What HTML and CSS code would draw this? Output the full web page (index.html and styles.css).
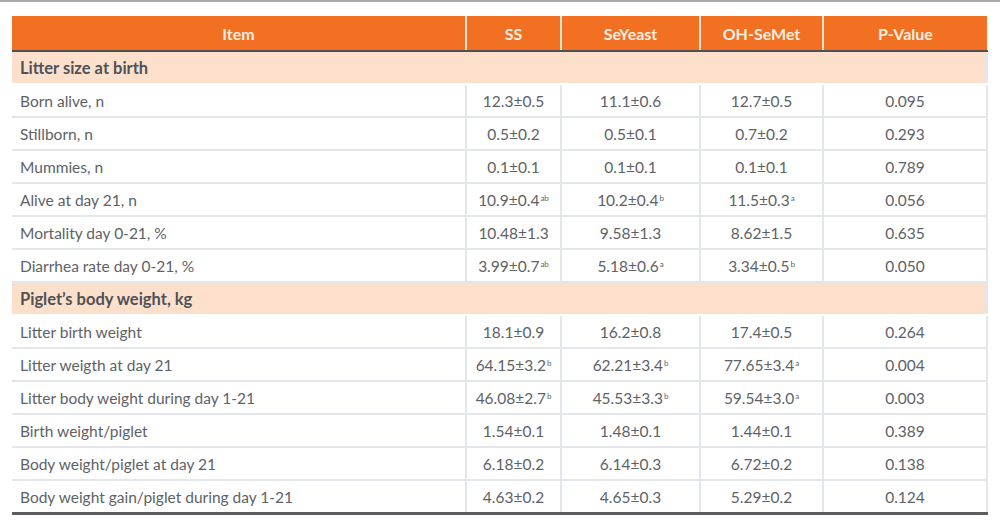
FILE: index.html
```html
<!DOCTYPE html>
<html>
<head>
<meta charset="utf-8">
<link rel="stylesheet" href="styles.css">
</head>
<body>
<div class="topline"></div>
<table class="data">
  <colgroup>
    <col class="c-item"><col class="c-ss"><col class="c-sey"><col class="c-oh"><col class="c-p">
  </colgroup>
  <thead>
    <tr><th>Item</th><th>SS</th><th>SeYeast</th><th>OH-SeMet</th><th>P-Value</th></tr>
  </thead>
  <tbody>
    <tr class="section"><td>Litter size at birth</td><td></td><td></td><td></td><td></td></tr>
    <tr><td>Born alive, n</td><td>12.3±0.5</td><td>11.1±0.6</td><td>12.7±0.5</td><td>0.095</td></tr>
    <tr><td>Stillborn, n</td><td>0.5±0.2</td><td>0.5±0.1</td><td>0.7±0.2</td><td>0.293</td></tr>
    <tr><td>Mummies, n</td><td>0.1±0.1</td><td>0.1±0.1</td><td>0.1±0.1</td><td>0.789</td></tr>
    <tr><td>Alive at day 21, n</td><td>10.9±0.4<sup>ab</sup></td><td>10.2±0.4<sup>b</sup></td><td>11.5±0.3<sup>a</sup></td><td>0.056</td></tr>
    <tr><td>Mortality day 0-21, %</td><td>10.48±1.3</td><td>9.58±1.3</td><td>8.62±1.5</td><td>0.635</td></tr>
    <tr><td>Diarrhea rate day 0-21, %</td><td>3.99±0.7<sup>ab</sup></td><td>5.18±0.6<sup>a</sup></td><td>3.34±0.5<sup>b</sup></td><td>0.050</td></tr>
    <tr class="section"><td>Piglet’s body weight, kg</td><td></td><td></td><td></td><td></td></tr>
    <tr><td>Litter birth weight</td><td>18.1±0.9</td><td>16.2±0.8</td><td>17.4±0.5</td><td>0.264</td></tr>
    <tr><td>Litter weigth at day 21</td><td>64.15±3.2<sup>b</sup></td><td>62.21±3.4<sup>b</sup></td><td>77.65±3.4<sup>a</sup></td><td>0.004</td></tr>
    <tr><td>Litter body weight during day 1-21</td><td>46.08±2.7<sup>b</sup></td><td>45.53±3.3<sup>b</sup></td><td>59.54±3.0<sup>a</sup></td><td>0.003</td></tr>
    <tr><td>Birth weight/piglet</td><td>1.54±0.1</td><td>1.48±0.1</td><td>1.44±0.1</td><td>0.389</td></tr>
    <tr><td>Body weight/piglet at day 21</td><td>6.18±0.2</td><td>6.14±0.3</td><td>6.72±0.2</td><td>0.138</td></tr>
    <tr><td>Body weight gain/piglet during day 1-21</td><td>4.63±0.2</td><td>4.65±0.3</td><td>5.29±0.2</td><td>0.124</td></tr>
  </tbody>
</table>
</body>
</html>
```
FILE: styles.css
```css
html, body {
  margin: 0;
  padding: 0;
  background: #ffffff;
}
body {
  font-family: Lato, "Open Sans", sans-serif;
  color: #5e6266;
}
.topline {
  height: 2px;
  background: #a9a9a9;
  margin-bottom: 14px;
}
.data {
  margin-left: 12px;
  width: 975px;
  border-collapse: collapse;
  table-layout: fixed;
  font-size: 15.5px;
}
.c-item { width: 454px; }
.c-ss { width: 95px; }
.c-sey { width: 139px; }
.c-oh { width: 123px; }
.c-p { width: 164px; }
.data th {
  background: #f27021;
  color: #fdeee2;
  font-weight: 700;
  height: 34px;
  padding: 0;
  text-align: center;
  border-left: 2px solid #fbe3d2;
  border-bottom: 2px solid #4f5052;
  font-size: 16px;
}
.data th:first-child { border-left: none; }
.data td {
  height: 31px;
  padding: 0 4px;
  text-align: center;
  border-left: 2px solid #e3e7ec;
  border-bottom: 2px solid #e3e7ec;
  white-space: nowrap;
}
.data td:first-child {
  text-align: left;
  border-left: none;
  padding-left: 8px;
}
.data td:last-child {
  border-right: 2px solid #e3e7ec;
}
.data tbody tr:last-child td {
  border-bottom: 3px solid #5b5d60;
}
.data tr.section td {
  background: #fde0cc;
  border-left-color: #fde0cc;
  border-bottom-color: #ffffff;
  font-weight: 700;
  font-size: 16.5px;
  color: #4e5256;
}
.data sup {
  font-size: 8px;
  line-height: 0;
  vertical-align: 5px;
  margin-left: 1px;
}
```
